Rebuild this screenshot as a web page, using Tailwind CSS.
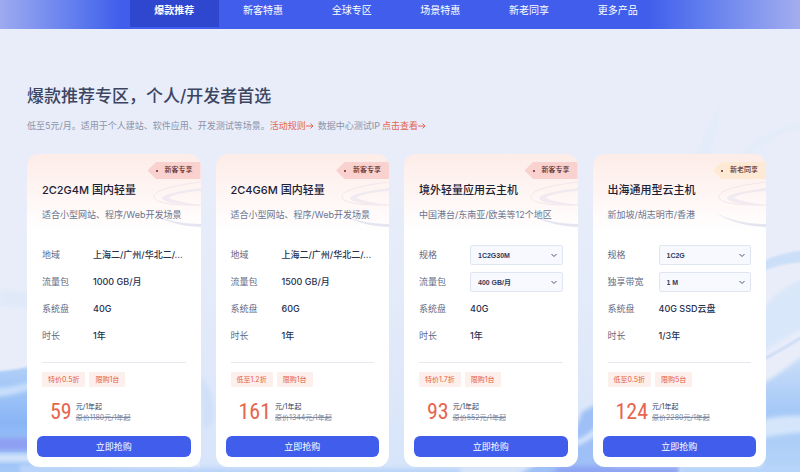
<!DOCTYPE html>
<html lang="zh-CN">
<head>
<meta charset="utf-8">
<meta name="viewport" content="width=device-width, initial-scale=1">
<title>爆款推荐专区</title>
<script src="https://cdn.jsdelivr.net/npm/@tailwindcss/browser@4"></script>
</head>
<body class="relative min-h-screen overflow-x-hidden bg-[#e9edf9] font-[Inter,'Noto_Sans_CJK_SC',sans-serif] text-[#2f3a5c]">
<svg class="absolute inset-0 h-full w-full" viewBox="0 0 800 472" preserveAspectRatio="none" aria-hidden="true">
  <defs>
    <filter id="edge" x="-20%" y="-20%" width="140%" height="140%"><feGaussianBlur stdDeviation="2"/></filter>
    <filter id="fine" x="-20%" y="-20%" width="140%" height="140%"><feGaussianBlur stdDeviation="1"/></filter>
    <linearGradient id="wave" x1="0" y1="0" x2="0" y2="1"><stop offset="0" stop-color="#b3d1f8"/><stop offset=".5" stop-color="#8ab5f5"/><stop offset="1" stop-color="#a9cbf8"/></linearGradient>
    <linearGradient id="sea" x1="0" y1="0" x2="0" y2="1"><stop offset="0" stop-color="#cfe1f9"/><stop offset=".45" stop-color="#a5c9f7"/><stop offset="1" stop-color="#b8d6f9"/></linearGradient>
    <linearGradient id="veil" x1="0" y1="0" x2="0" y2="1"><stop offset="0" stop-color="#e2eaf9" stop-opacity="0"/><stop offset="1" stop-color="#d6e4fa"/></linearGradient>
  </defs>
  <rect x="200" y="150" width="440" height="322" fill="url(#veil)"/>
  <path d="M0 290Q20 291 40 296V310Q20 306 0 306Z" fill="#dfe9f8" filter="url(#edge)"/>
  <path d="M-10 372Q20 370 40 364V480H-10Z" fill="url(#wave)" filter="url(#fine)"/>
  <path d="M-10 388Q15 388 40 379V385Q15 397 -10 397Z" fill="#c9dffb" filter="url(#edge)"/>
  <path d="M-10 438H40V450H-10Z" fill="#8f9ff2" filter="url(#edge)"/>
  <path d="M-10 454H40V462H-10Z" fill="#d3e4fb" filter="url(#edge)"/>
  <path d="M200 378Q214 386 214 420L204 430Z" fill="#cfe0f8" filter="url(#edge)"/>
  <path d="M20 464Q240 470 460 468V484H20Z" fill="#b9d4f9" filter="url(#edge)"/>
  <path d="M500 484Q572 450 582 412L612 396V484Z" fill="#9fc0f6" filter="url(#edge)"/>
  <path d="M572 444Q590 440 602 424" stroke="#dce9fc" stroke-width="5" fill="none" filter="url(#edge)"/>
  <path d="M560 466H680V484H540Z" fill="#8fa5f3" filter="url(#edge)"/>
  <path d="M762 384Q780 374 810 350V484H762Z" fill="url(#sea)" filter="url(#edge)"/>
  <path d="M680 466H810V484H680Z" fill="#b6d4f9" filter="url(#edge)"/>
  <path d="M762 420Q780 415 810 416V432Q780 434 762 438Z" fill="#d5e6fb" filter="url(#edge)"/>
  <path d="M762 262Q780 252 810 250V262Q780 262 762 272Z" fill="#cbdff8" filter="url(#fine)"/>
  <path d="M762 310Q780 286 810 276V326Q785 336 762 354Z" fill="#d9e7fa" filter="url(#edge)"/>
  <path d="M762 360Q782 350 810 332" stroke="#b3cef5" stroke-width="1.500" fill="none" filter="url(#fine)"/>
  <path d="M696 156Q710 120 722 100Q718 130 708 156ZM740 154Q765 127 805 122V128Q770 134 750 156Z" fill="#e3ecf9" filter="url(#edge)"/>
</svg>

<header class="relative h-[29px] bg-linear-to-r from-[#9eaaf0] via-[#405eeb] via-15% to-[#405eeb]">
  <div class="absolute inset-y-0 right-0 w-[19%] bg-linear-to-r from-[#405eeb] to-[#a3adef]"></div>
  <nav class="relative mr-[17.25%] ml-[16.25%] flex text-center text-[10px] text-white" aria-label="产品专区">
    <a href="#" class="h-[27px] flex-1 bg-[#2f47cf] pt-0.5 font-bold leading-4">爆款推荐</a>
    <a href="#" class="flex-1 pt-0.5 leading-4">新客特惠</a>
    <a href="#" class="flex-1 pt-0.5 leading-4">全球专区</a>
    <a href="#" class="flex-1 pt-0.5 leading-4">场景特惠</a>
    <a href="#" class="flex-1 pt-0.5 leading-4">新老同享</a>
    <a href="#" class="flex-1 pt-0.5 leading-4">更多产品</a>
  </nav>
</header>

<main class="relative pr-[34px] pl-[27px] pt-[55px] pb-[5px]">
  <h1 class="text-[17px] font-medium leading-6 text-[#3b4562]">爆款推荐专区，个人/开发者首选</h1>
  <p class="mt-2.5 flex text-[9px] leading-4 text-[#8b93aa]">
    <span>低至5元/月。适用于个人建站、软件应用、开发测试等场景。</span>
    <a href="#" class="flex items-center text-[#e5654f]">活动规则<svg class="size-2" viewBox="0 0 8 8" fill="none" stroke="currentColor" aria-hidden="true"><path d="M0 4H7M4.500 1.500L7 4L4.500 6.500"/></svg></a>
    <span class="ml-1">数据中心测试IP</span>
    <a href="#" class="ml-0.5 flex items-center text-[#e5654f]">点击查看<svg class="size-2" viewBox="0 0 8 8" fill="none" stroke="currentColor" aria-hidden="true"><path d="M0 4H7M4.500 1.500L7 4L4.500 6.500"/></svg></a>
  </p>
  <div id="cards" class="mt-5 grid grid-cols-4 gap-[15px]"></div>
</main>

<template id="card">
  <article class="relative overflow-hidden rounded-xl bg-white bg-linear-to-b from-[#fdece8] to-white to-25% px-[15px] pb-[10px] pt-7">
    <svg class="absolute right-0 top-6 h-[54px] w-[54px]" viewBox="0 0 54 54" fill="none" aria-hidden="true">
      <g filter="url(#glow)">
        <path d="M54 10Q16 15 15 20Q17 27 54 27Q30 24 22 20Q26 15 54 13Z" fill="#e6e3ee" opacity=".6"/>
        <path d="M54 4Q4 10 7 20Q12 28 54 27" stroke="#f3e6e9"/>
        <path d="M2 34Q24 46 54 46V49Q24 48 2 34Z" fill="#e4e5f0"/>
      </g>
      <defs><filter id="glow"><feGaussianBlur stdDeviation=".6"/></filter></defs>
    </svg>
    <div data-badge class="absolute right-0 top-2 flex h-[17px] w-[53px] items-center pl-2 text-[7px] font-medium text-[#5c2b2b] [clip-path:polygon(0_50%,16%_0,100%_0,100%_100%,16%_100%)]"><span class="mr-[7px] size-0.5 shrink-0 rounded-full bg-[#6b2626]"></span><span data-badge-text class="whitespace-nowrap"></span></div>
    <h2 class="relative whitespace-nowrap text-[11px] font-medium leading-4 text-[#1c2136]"></h2>
    <p data-sub class="relative mt-[9px] whitespace-nowrap text-[9px] leading-4 text-[#6b738f]"></p>
    <dl class="mt-[22px] grid grid-cols-[51px_minmax(0,1fr)] gap-y-[7px] text-[9px] leading-5"></dl>
    <hr class="mt-4 border-[#e6e7ef]">
    <div data-tags class="mt-[9px] flex gap-1 text-[7px] leading-[15px] text-[#e35c44]"></div>
    <div class="mt-3 flex h-[26px] items-center gap-1 pl-2">
      <strong data-price class="font-['Noto_Sans_ExtraCondensed','Noto_Sans_Condensed','Roboto_Condensed','Open_Sans_Condensed','Liberation_Sans',sans-serif] text-[22px] font-normal leading-6 text-[#e7654e]"></strong>
      <div class="whitespace-nowrap text-[7px] leading-[11px]"><p>元/1年起</p><del class="block text-[#7d87a0]"></del></div>
    </div>
    <button type="button" class="-mx-[5px] mt-[11px] block h-[21px] w-[calc(100%+10px)] rounded-[6px] bg-[#405eeb] text-[9px] text-white">立即抢购</button>
  </article>
</template>

<script>
const products = [
  { title: '2C2G4M 国内轻量', sub: '适合小型网站、程序/Web开发场景', badge: '新客专享', rows: [['地域','上海二/广州/华北二/…'],['流量包','1000 GB/月'],['系统盘','40G'],['时长','1年']], tags: ['特价0.5折','限购1台'], price: '59', old: '1180' },
  { title: '2C4G6M 国内轻量', sub: '适合小型网站、程序/Web开发场景', badge: '新客专享', rows: [['地域','上海二/广州/华北二/…'],['流量包','1500 GB/月'],['系统盘','60G'],['时长','1年']], tags: ['低至1.2折','限购1台'], price: '161', old: '1344' },
  { title: '境外轻量应用云主机', sub: '中国港台/东南亚/欧美等12个地区', badge: '新客专享', rows: [['规格','1C2G30M',1],['流量包','400 GB/月',1],['系统盘','40G'],['时长','1年']], tags: ['特价1.7折','限购1台'], price: '93', old: '552' },
  { title: '出海通用型云主机', sub: '新加坡/胡志明市/香港', badge: '新老同享', gold: true, rows: [['规格','1C2G',1],['独享带宽','1 M',1],['系统盘','40G SSD云盘'],['时长','1/3年']], tags: ['低至0.5折','限购5台'], price: '124', old: '2280' }
];
products.forEach((p, i) => {
  const card = document.getElementById('card').content.cloneNode(true);
  const $ = s => card.querySelector(s);
  $('h2').textContent = p.title;
  $('[data-sub]').textContent = p.sub;
  $('[data-badge-text]').textContent = p.badge;
  $('[data-badge]').classList.add(p.gold ? 'bg-[#feead4]' : 'bg-[#f9d2cf]');
  $('dl').innerHTML = p.rows.map(([k, v, select], j) => select
    ? `<dt class="text-[#5f6883]"><label for="s${i}${j}">${k}</label></dt><dd class="relative"><select id="s${i}${j}" class="block h-5 w-full appearance-none rounded-[2px] border border-[#e0e5f2] bg-[#f7f9ff] px-[7px] font-['Liberation_Sans','Noto_Sans_CJK_SC',sans-serif] text-[7px] font-bold text-[#2f3a5c]"><option>${v}</option></select><svg class="pointer-events-none absolute right-1.5 top-[7px] size-1.5" viewBox="0 0 6 6" fill="none" stroke="#4c5676" aria-hidden="true"><path d="M.500 2L3 4.500L5.500 2"/></svg></dd>`
    : `<dt class="text-[#5f6883]">${k}</dt><dd class="whitespace-nowrap font-medium text-[#27304f]">${v}</dd>`).join('');
  $('[data-tags]').innerHTML = p.tags.map(t => `<span class="whitespace-nowrap rounded-[1px] bg-[#fdefeb] px-1.5">${t}</span>`).join('');
  $('[data-price]').textContent = p.price;
  $('del').textContent = `原价${p.old}元/1年起`;
  document.getElementById('cards').append(card);
});
</script>
</body>
</html>
